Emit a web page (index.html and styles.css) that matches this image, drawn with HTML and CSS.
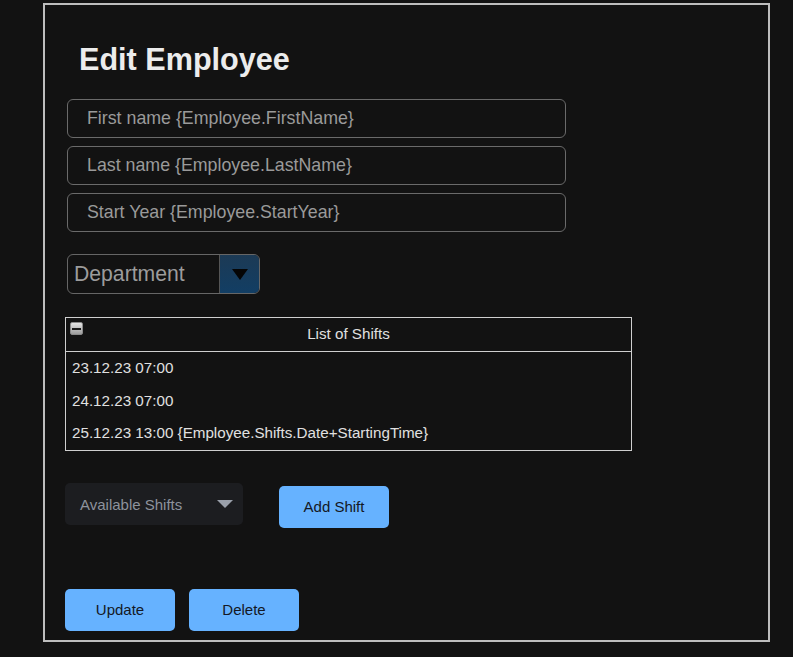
FILE: index.html
```html
<!DOCTYPE html>
<html lang="en">
<head>
<meta charset="utf-8">
<title>Edit Employee</title>
<link rel="stylesheet" href="styles.css">
</head>
<body>
<div class="panel">
  <h1 class="title">Edit Employee</h1>
  <div class="fields">
    <input class="field" type="text" placeholder="First name {Employee.FirstName}">
    <input class="field" type="text" placeholder="Last name {Employee.LastName}">
    <input class="field" type="text" placeholder="Start Year {Employee.StartYear}">
  </div>
  <div class="dept">
    <span class="dept-label">Department</span>
    <span class="dept-btn"><span class="dept-arrow"></span></span>
  </div>
  <div class="shifts">
    <div class="shifts-head">
      <span class="collapse"><span class="collapse-bar"></span></span>
      <span class="shifts-title">List of Shifts</span>
      <span></span>
    </div>
    <div class="shift-row">23.12.23 07:00</div>
    <div class="shift-row">24.12.23 07:00</div>
    <div class="shift-row">25.12.23 13:00 {Employee.Shifts.Date+StartingTime}</div>
  </div>
  <div class="add-row">
    <div class="avail">
      <span class="avail-label">Available Shifts</span>
      <span class="avail-arrow"></span>
    </div>
    <button class="btn btn-add">Add Shift</button>
  </div>
  <div class="actions">
    <button class="btn">Update</button>
    <button class="btn">Delete</button>
  </div>
</div>
</body>
</html>
```
FILE: styles.css
```css
html, body {
  margin: 0;
  padding: 0;
  background: #121212;
  font-family: "Liberation Sans", Arial, sans-serif;
}

.panel {
  box-sizing: border-box;
  width: 727px;
  height: 639px;
  margin: 3px 0 0 43px;
  border: 2px solid #bdbdbd;
  padding: 0 0 0 20px;
  display: flex;
  flex-direction: column;
  align-items: flex-start;
}

.title {
  margin: 36px 0 0 14px;
  font-size: 30.6px;
  line-height: 36px;
  font-weight: bold;
  color: #ececec;
}

.fields {
  margin: 22px 0 0 2px;
  display: flex;
  flex-direction: column;
  gap: 8px;
}

.field {
  box-sizing: border-box;
  width: 499px;
  height: 39px;
  margin: 0;
  border: 1px solid #6a6a6a;
  border-radius: 6px;
  background: #121212;
  padding: 0 0 0 19px;
  font-family: "Liberation Sans", Arial, sans-serif;
  font-size: 17.8px;
  color: #ddd;
  outline: none;
}

.field::placeholder {
  color: #9a9a9a;
}

.dept {
  box-sizing: border-box;
  margin: 22px 0 0 2px;
  width: 193px;
  height: 40px;
  border: 1px solid #666;
  border-radius: 6px;
  display: flex;
  overflow: hidden;
}

.dept-label {
  flex: 1;
  padding-left: 6px;
  font-size: 21.2px;
  line-height: 38px;
  color: #9c9c9c;
}

.dept-btn {
  width: 39px;
  border-left: 1px solid #555;
  background: linear-gradient(#1c3a55, #123e64);
  display: flex;
  align-items: center;
  justify-content: center;
}

.dept-arrow {
  width: 0;
  height: 0;
  border-left: 8px solid transparent;
  border-right: 8px solid transparent;
  border-top: 11px solid #050505;
  margin-top: 1px;
}

.shifts {
  box-sizing: border-box;
  margin-top: 23px;
  width: 567px;
  border: 1px solid #cfcfcf;
  color: #e0e0e0;
  font-size: 15.2px;
}

.shifts-head {
  height: 33px;
  border-bottom: 1px solid #cfcfcf;
  display: grid;
  grid-template-columns: 1fr auto 1fr;
  align-items: start;
}

.shifts-title {
  line-height: 31px;
}

.collapse {
  box-sizing: border-box;
  margin: 4px 0 0 4px;
  width: 13px;
  height: 13px;
  border: 1px solid #8a8a8a;
  border-radius: 2px;
  background: linear-gradient(#e4e4e4, #9c9c9c);
  display: flex;
  align-items: center;
  justify-content: center;
}

.collapse-bar {
  width: 9px;
  height: 2px;
  background: #1a1a1a;
}

.shift-row {
  height: 32.7px;
  line-height: 32.7px;
  padding-left: 6px;
}

.add-row {
  margin-top: 32px;
  display: flex;
  align-items: flex-start;
  gap: 36px;
}

.avail {
  box-sizing: border-box;
  width: 178px;
  height: 42px;
  border-radius: 5px;
  background: #1c1d20;
  padding: 0 10px 0 15px;
  display: flex;
  align-items: center;
  justify-content: space-between;
}

.avail-label {
  font-size: 15px;
  color: #8d929c;
}

.avail-arrow {
  width: 0;
  height: 0;
  border-left: 8px solid transparent;
  border-right: 8px solid transparent;
  border-top: 8px solid #9aa0aa;
}

.btn {
  box-sizing: border-box;
  width: 110px;
  height: 42px;
  border: none;
  border-radius: 5px;
  background: #66b2ff;
  color: #141824;
  font-family: "Liberation Sans", Arial, sans-serif;
  font-size: 15px;
  padding: 0 0 2px;
}

.btn-add {
  margin-top: 3px;
}

.actions {
  margin-top: 61px;
  display: flex;
  gap: 14px;
}
```
